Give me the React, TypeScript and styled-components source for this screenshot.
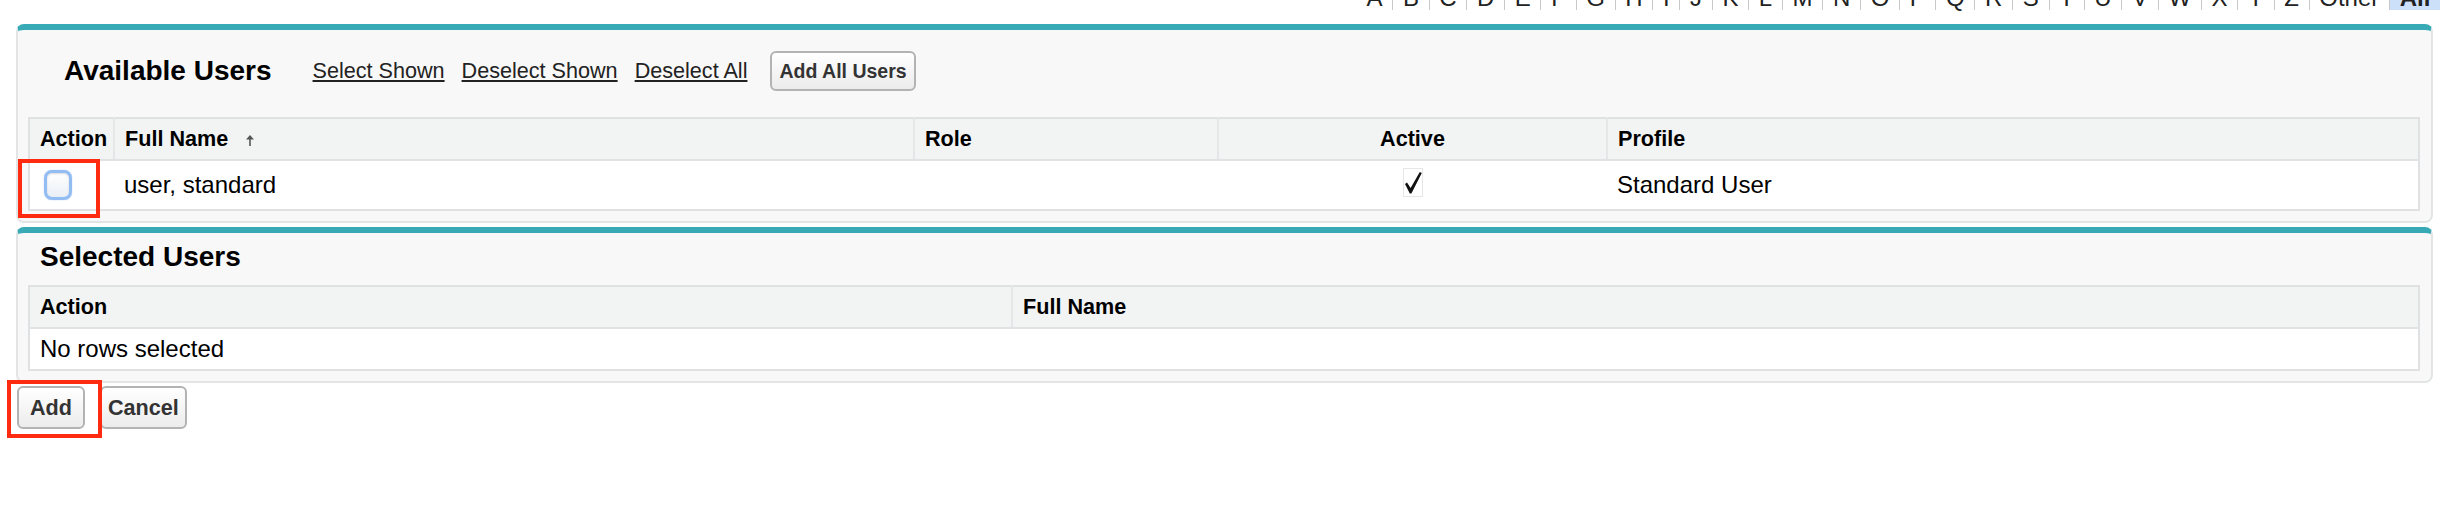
import styled, { createGlobalStyle } from "styled-components";

const GlobalStyle = createGlobalStyle`
  body {
    margin: 0;
    background: #fff;
    font-family: "Liberation Sans", Arial, Helvetica, sans-serif;
    color: #000;
  }
`;

const Page = styled.div`
  height: 532px;
  padding-left: 16px;
  overflow: hidden;
`;

// alphabet filter, scrolled mostly out of view at the top
const Rolodex = styled.div`
  display: flex;
  justify-content: flex-end;
  align-items: flex-start;
  height: 38px;
  margin-top: -14px;
`;

const Letter = styled.a<{ $current?: boolean }>`
  height: 24px;
  line-height: 24px;
  padding: 0 9.7px;
  border-left: 1px solid #c8c8c8;
  font-size: 24px;
  color: #222;
  text-decoration: none;
  font-weight: ${(p) => (p.$current ? 700 : 400)};
  background: ${(p) => (p.$current ? "#cde0fa" : "transparent")};
  &:first-child {
    border-left: none;
  }
`;

const Panel = styled.section<{ $gap?: number }>`
  margin: ${(p) => p.$gap ?? 0}px 7px 0 0;
  background: #f8f8f8;
  border: 2px solid #e3e4e5;
  border-top: 6px solid #37aab6;
  border-radius: 8px;
  padding: 0 11px 10px 10px;
`;

const HeaderBar = styled.div`
  display: flex;
  align-items: center;
  gap: 17px;
  height: 40px;
  margin: 21px 0 26px;
  padding-left: 36px;
`;

const Title = styled.h2`
  margin: 0 24px 0 0;
  font-size: 28px;
  font-weight: 700;
  line-height: 32px;
  color: #000;
`;

const SubTitle = styled.h3`
  margin: 8px 0 12px 12px;
  font-size: 28px;
  font-weight: 700;
  line-height: 32px;
  color: #000;
`;

const TextLink = styled.a`
  font-size: 21.6px;
  color: #222;
  text-decoration: underline;
  cursor: pointer;
`;

const Button = styled.button<{ $small?: boolean }>`
  height: ${(p) => (p.$small ? 40 : 43)}px;
  min-width: 68px;
  padding: 0 ${(p) => (p.$small ? 7 : 6)}px;
  margin-left: ${(p) => (p.$small ? 6 : 0)}px;
  font-family: inherit;
  font-size: ${(p) => (p.$small ? 19.5 : 21.6)}px;
  font-weight: 700;
  color: #333;
  background: linear-gradient(#ffffff, #ececec);
  border: 2px solid #b3b3b3;
  border-radius: 6px;
`;

const Grid = styled.table`
  width: 100%;
  table-layout: fixed;
  border-collapse: collapse;
  background: #fff;
  border: 2px solid #dfe1e3;
`;

const HeadCell = styled.th<{ $center?: boolean }>`
  height: 40px;
  padding: 0 10px;
  background: #f2f3f3;
  border-bottom: 2px solid #e0e3e5;
  border-left: 2px solid #e4e6e7;
  font-size: 21.6px;
  font-weight: 700;
  text-align: ${(p) => (p.$center ? "center" : "left")};
  white-space: nowrap;
  &:first-child {
    border-left: none;
  }
`;

const Cell = styled.td<{ $center?: boolean; $tall?: boolean }>`
  position: relative;
  height: ${(p) => (p.$tall ? 48 : 40)}px;
  padding: 0 10px;
  font-size: 24px;
  color: #000;
  text-align: ${(p) => (p.$center ? "center" : "left")};
  vertical-align: middle;
`;

const SortArrow = styled.svg`
  margin-left: 18px;
  vertical-align: middle;
`;

const Check = styled.input`
  appearance: none;
  display: block;
  width: 28px;
  height: 30px;
  margin: 0 0 0 4px;
  border: 3px solid #93bdf2;
  border-radius: 8px;
  background: linear-gradient(#ffffff, #eaeff6);
  box-shadow: inset 0 1px 2px rgba(0, 0, 0, 0.15), 0 0 1px #6aa0e8;
`;

const Mark = styled.span<{ $top: number; $left: number; $w: number; $h: number }>`
  position: absolute;
  top: ${(p) => p.$top}px;
  left: ${(p) => p.$left}px;
  width: ${(p) => p.$w}px;
  height: ${(p) => p.$h}px;
  box-sizing: border-box;
  border: 4px solid #ff2b10;
  pointer-events: none;
`;

const Actions = styled.div`
  display: flex;
  gap: 15px;
  margin-top: 3px;
  padding-left: 1px;
`;

const Annotated = styled.span`
  position: relative;
  display: inline-flex;
`;

const letters = "ABCDEFGHIJKLMNOPQRSTUVWXYZ".split("").concat(["Other"]);

const ActiveCheck = () => (
  <svg width="20" height="29" viewBox="0 0 20 29">
    <rect x="0.5" y="0.5" width="19" height="28" fill="none" stroke="#cfcfcf" strokeDasharray="1 1" />
    <path d="M2 16 L4 14.6 L7.6 20 L16.8 4 L18.8 5 L8.4 25.5 L6.8 25.5 Z" fill="#111" />
  </svg>
);

export default function App() {
  return (
    <>
      <GlobalStyle />
      <Page>
        <Rolodex>
          {letters.map((l) => (
            <Letter key={l}>{l}</Letter>
          ))}
          <Letter $current>All</Letter>
        </Rolodex>

        <Panel>
          <HeaderBar>
            <Title>Available Users</Title>
            <TextLink>Select Shown</TextLink>
            <TextLink>Deselect Shown</TextLink>
            <TextLink>Deselect All</TextLink>
            <Button $small>Add All Users</Button>
          </HeaderBar>
          <Grid>
            <colgroup>
              <col style={{ width: 85 }} />
              <col style={{ width: 800 }} />
              <col style={{ width: 304 }} />
              <col style={{ width: 389 }} />
              <col />
            </colgroup>
            <thead>
              <tr>
                <HeadCell>Action</HeadCell>
                <HeadCell>
                  Full Name
                  <SortArrow width="8" height="11" viewBox="0 0 8 11">
                    <path d="M4 0 L8 4.5 H4.8 V11 H3.2 V4.5 H0 Z" fill="#555" />
                  </SortArrow>
                </HeadCell>
                <HeadCell>Role</HeadCell>
                <HeadCell $center>Active</HeadCell>
                <HeadCell>Profile</HeadCell>
              </tr>
            </thead>
            <tbody>
              <tr>
                <Cell $tall>
                  <Check type="checkbox" />
                  <Mark $top={-2} $left={-12} $w={82} $h={59} />
                </Cell>
                <Cell $tall>user, standard</Cell>
                <Cell $tall />
                <Cell $tall $center>
                  <ActiveCheck />
                </Cell>
                <Cell $tall>Standard User</Cell>
              </tr>
            </tbody>
          </Grid>
        </Panel>

        <Panel $gap={4}>
          <SubTitle>Selected Users</SubTitle>
          <Grid>
            <colgroup>
              <col style={{ width: 983 }} />
              <col />
            </colgroup>
            <thead>
              <tr>
                <HeadCell>Action</HeadCell>
                <HeadCell>Full Name</HeadCell>
              </tr>
            </thead>
            <tbody>
              <tr>
                <Cell colSpan={2}>No rows selected</Cell>
              </tr>
            </tbody>
          </Grid>
        </Panel>

        <Actions>
          <Annotated>
            <Button>Add</Button>
            <Mark $top={-6} $left={-10} $w={95} $h={58} />
          </Annotated>
          <Button>Cancel</Button>
        </Actions>
      </Page>
    </>
  );
}
